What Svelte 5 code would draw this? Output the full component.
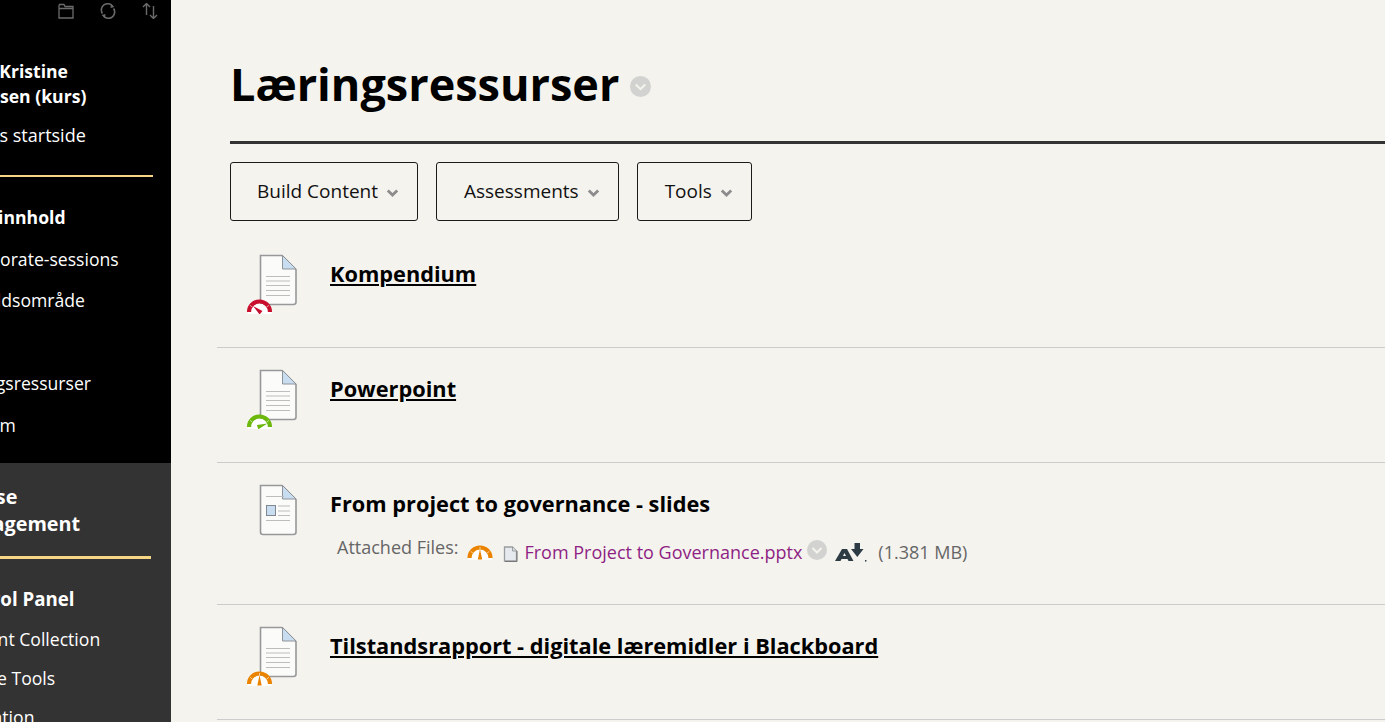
<script lang="ts">
	const topLinks = ['Emneinnhold', 'Collaborate-sessions', 'Innholdsområde', 'Info', 'Læringsressurser', 'Pensum'];
	const bottomLinks = ['Content Collection', 'Course Tools', 'Evaluation'];

	const rows = [
		{ title: 'Kompendium', link: true, gauge: { color: '#c8102e', angle: -50 } },
		{ title: 'Powerpoint', link: true, gauge: { color: '#6cb80c', angle: 70 } },
		{ title: 'From project to governance - slides', link: false, gauge: null, attachment: true },
		{ title: 'Tilstandsrapport - digitale læremidler i Blackboard', link: true, gauge: { color: '#e98300', angle: 0 } }
	];
</script>

{#snippet chevron(cls)}
	<svg class={cls} viewBox="0 0 20 20" aria-hidden="true">
		<circle cx="10" cy="10" r="10" fill="#d2d2d0" />
		<path d="M5.5 8 L10 12.5 L14.5 8" fill="none" stroke="#f5f3ee" stroke-width="2" />
	</svg>
{/snippet}

{#snippet caret()}
	<svg class="caret" viewBox="0 0 13 8" aria-hidden="true">
		<path d="M1.8 1.5 L6.5 6 L11.2 1.5" fill="none" stroke="#8c8c8c" stroke-width="2.8" />
	</svg>
{/snippet}

{#snippet gaugeArt(color, angle)}
	<rect x="1" y="13" width="24" height="3" fill="#fff" />
	<path d="M4.5 14 A8.5 8.5 0 0 1 21.5 14 Z" fill="#fff" />
	<path d="M2.5 14 A10.5 10.5 0 0 1 23.5 14" fill="none" stroke={color} stroke-width="4.2" />
	<path d="M6 9.1 L3.6 7.4 M20 9.1 L22.4 7.4" stroke="#fff" stroke-width="0.6" />
	{#if angle === 0}
		<path d="M13 3 V5.5" stroke="#fff" stroke-width="0.6" />
	{/if}
	<g transform="rotate({angle} 13 13.5)">
		<path d="M10.8 15.5 L13 5 L15.2 15.5 Z" fill={color} />
	</g>
{/snippet}

{#snippet docIcon(kind, gauge)}
	<svg class="doc" viewBox="0 0 60 66" aria-hidden="true">
		<path d="M15.5 5.5 H37 L51 19.5 V52 Q51 54.5 48.5 54.5 H18 Q15.5 54.5 15.5 52 Z" fill="#fbfbfa" stroke="#96989a" stroke-width="1.6" />
		<path d="M37.5 5.5 L51 19 H37.5 Z" fill="#c9ddf0" stroke="#8f9397" stroke-width="1" />
		{#if kind === 'slides'}
			<path d="M21 16.5 H39 M21 40.5 H45 M33 26 H45 M33 31 H45 M33 35.5 H45" stroke="#bdbdbd" stroke-width="1" />
			<rect x="21.5" y="25.5" width="9" height="10" fill="#c9ddf0" stroke="#7f8790" stroke-width="1" />
		{:else}
			<path d="M21 26.5 H45 M21 31 H45 M21 35.5 H45 M21 40.5 H45 M21 45.5 H45" stroke="#bdbdbd" stroke-width="1" />
		{/if}
		{#if gauge}
			<svg x="1.5" y="48" width="26" height="16" viewBox="0 0 26 16">
				{@render gaugeArt(gauge.color, gauge.angle)}
			</svg>
		{/if}
	</svg>
{/snippet}

<div class="page">
	<aside class="sidebar">
		<div class="top">
			<div class="tools">
				<svg viewBox="0 0 16 16" aria-hidden="true">
					<path d="M1 4 V15 H15 V3.5 H7 L6 1.5 H1.5 L1 2.5 Z M1 5.5 H15" fill="none" stroke="#6b6b6b" stroke-width="1.3" />
				</svg>
				<svg viewBox="0 0 16 16" aria-hidden="true">
					<path d="M2.4 10.5 A6.3 6.3 0 0 1 12.5 3 M13.6 5.5 A6.3 6.3 0 0 1 3.5 13" fill="none" stroke="#6b6b6b" stroke-width="1.6" />
					<path d="M11 1 L14.5 4 L10.5 5 Z M5 15 L1.5 12 L5.5 11 Z" fill="#6b6b6b" />
				</svg>
				<svg viewBox="0 0 16 16" aria-hidden="true">
					<path d="M4.5 12 V0.5 M1 4 L4.5 0.5 L8 4 M11.5 3 V15.5 M8 12 L11.5 15.5 L15 12" fill="none" stroke="#6b6b6b" stroke-width="1.4" />
				</svg>
			</div>
			<div class="course-name">Anne Kristine<br />Pedersen (kurs)</div>
			<div class="home">Kursets startside</div>
			<hr class="rule" />
			<ul>
				{#each topLinks as item, i}
					<li class:bold={i === 0}>{item}</li>
				{/each}
			</ul>
		</div>
		<div class="bottom">
			<div class="manage">Course<br />Management</div>
			<hr class="rule thick" />
			<div class="panel">Control Panel</div>
			<ul>
				{#each bottomLinks as item}
					<li>{item}</li>
				{/each}
			</ul>
		</div>
	</aside>

	<main class="content">
		<header class="head">
			<h1>Læringsressurser</h1>
			{@render chevron('title-chevron')}
		</header>
		<div class="actions">
			<button>Build Content {@render caret()}</button>
			<button>Assessments {@render caret()}</button>
			<button>Tools {@render caret()}</button>
		</div>
		<div class="list">
			{#each rows as row}
				<section class="row">
					{@render docIcon(row.attachment ? 'slides' : 'text', row.gauge)}
					<div class="body">
						<h2 class:link={row.link}>{row.title}</h2>
						{#if row.attachment}
							<div class="attached">
								<span class="label">Attached Files:</span>
								<svg class="mini-gauge" viewBox="0 0 26 16" aria-hidden="true">
									{@render gaugeArt('#e98300', 0)}
								</svg>
								<svg class="file" viewBox="0 0 15 16" aria-hidden="true">
									<path d="M1.5 1 H9.5 L13.5 5 V15 H1.5 Z" fill="#e6eaee" stroke="#9a9c9e" stroke-width="1.3" />
									<path d="M9.5 1 V5 H13.5" fill="#d8dde2" stroke="#8e9092" stroke-width="0.8" />
									<path d="M14 5 V15.5 H2" fill="none" stroke="#777" stroke-width="1" />
								</svg>
								<span class="file-link">From Project to Governance.pptx</span>
								{@render chevron('file-chevron')}
								<svg class="ally" viewBox="0 0 32 19" aria-hidden="true">
									<path d="M0 18 L7 6 H12 L18.5 18 H13.5 L12.5 16 H6.5 L5.5 18 Z M8 13 H11 L9.5 10 Z" fill="#2d3b45" fill-rule="evenodd" />
									<path d="M19.5 0 H25 V6 H28.5 L22.3 14 L16 6 H19.5 Z" fill="#2d3b45" />
									<rect x="30" y="17" width="1.4" height="1.6" fill="#2d3b45" />
								</svg>
								<span class="size">(1.381 MB)</span>
							</div>
						{/if}
					</div>
				</section>
			{/each}
		</div>
	</main>
</div>

<style>
	:global(body) {
		overflow: hidden;
		background: #f5f3ee;
	}
	.page {
		display: flex;
		height: 722px;
		overflow: hidden;
		font-family: 'Open Sans', 'Liberation Sans', sans-serif;
	}
	.sidebar {
		width: 171px;
		flex: none;
		display: flex;
		flex-direction: column;
		overflow: hidden;
		color: #fff;
		white-space: nowrap;
		font-size: 17.6px;
	}
	.top {
		height: 463px;
		flex: none;
		background: #000;
	}
	.bottom {
		flex: 1;
		background: #333;
	}
	.tools {
		display: flex;
		gap: 26px;
		padding: 3px 0 0 58px;
	}
	.tools svg {
		width: 16px;
		height: 16px;
	}
	.course-name {
		margin: 40px 0 0 -51px;
		font-weight: 700;
		line-height: 24.5px;
	}
	.home {
		margin: 15px 0 0 -55px;
		font-size: 18px;
		line-height: 25px;
	}
	.rule {
		margin: 27px 0 0;
		width: 153px;
		height: 2px;
		border: none;
		background: #f6d587;
	}
	.thick {
		width: 151px;
		height: 3px;
		margin-top: 19px;
	}
	ul {
		list-style: none;
		margin: 0;
		padding: 0;
	}
	.top ul {
		margin: 20px 0 0 -51px;
	}
	.top li {
		line-height: 41.6px;
	}
	.bold {
		font-weight: 700;
	}
	.manage {
		margin: 20px 0 0 -51px;
		font-size: 19.8px;
		font-weight: 700;
		line-height: 27px;
	}
	.panel {
		margin: 27px 0 0 -52px;
		font-size: 18.7px;
		font-weight: 700;
		line-height: 25px;
	}
	.bottom ul {
		margin: 9px 0 0 -51px;
	}
	.bottom li {
		line-height: 39px;
	}
	.content {
		flex: 1;
		min-width: 0;
		padding-left: 46px;
		color: #000;
	}
	.head {
		display: flex;
		align-items: center;
		gap: 11px;
		margin-left: 13px;
		height: 115px;
		padding-top: 26px;
		border-bottom: 3px solid #333;
	}
	h1 {
		margin: 0;
		font-size: 45px;
		font-weight: 700;
		line-height: 60px;
	}
	:global(.title-chevron) {
		width: 21px;
		height: 21px;
		margin-top: 6px;
	}
	.actions {
		display: flex;
		gap: 18px;
		margin: 18px 0 0 13px;
	}
	button {
		height: 59px;
		padding: 0 18px 2px 26px;
		background: none;
		border: 1px solid #1a1a1a;
		border-radius: 3px;
		font: inherit;
		font-size: 19px;
		color: #111;
		display: flex;
		align-items: center;
		gap: 8px;
	}
	button + button {
		padding-left: 27px;
	}
	.caret {
		width: 13px;
		height: 8px;
		margin-top: 5px;
	}
	.list {
		margin-top: 12px;
	}
	.row {
		display: flex;
		gap: 25px;
		min-height: 114px;
		padding-left: 28px;
		border-bottom: 1px solid #ccc;
	}
	.doc {
		width: 60px;
		height: 66px;
		flex: none;
		margin-top: 17px;
	}
	.body {
		flex: 1;
		padding-top: 26px;
	}
	h2 {
		margin: 0;
		font-size: 21.76px;
		font-weight: 700;
		line-height: 30px;
	}
	h2.link {
		text-decoration: underline;
	}
	.attached {
		display: flex;
		align-items: flex-start;
		margin: 16px 0 40px 7px;
		font-size: 18px;
		color: #666;
		line-height: 24px;
	}
	.mini-gauge {
		width: 26px;
		height: 16px;
		margin: 9px 0 0 9px;
	}
	.file {
		width: 15px;
		height: 16px;
		margin: 11px 0 0 10px;
	}
	.file-link {
		margin: 5px 0 0 6px;
		color: #8e1f84;
	}
	:global(.file-chevron) {
		width: 20px;
		height: 20px;
		margin: 5px 0 0 5px;
	}
	.ally {
		width: 32px;
		height: 19px;
		margin: 8px 0 0 8px;
	}
	.size {
		margin: 5px 0 0 11px;
	}
</style>
